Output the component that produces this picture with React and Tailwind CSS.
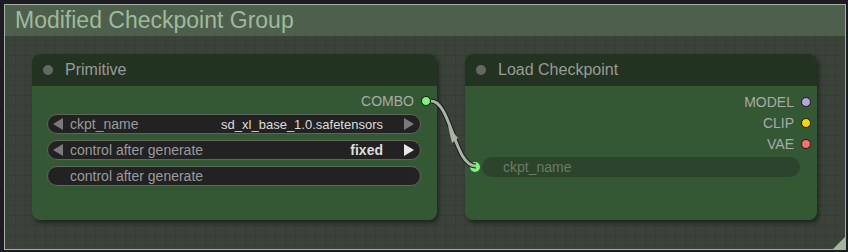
const font = { fontFamily: '"Liberation Sans", Arial, sans-serif' };

function Dot({ color, className = "" }) {
  return (
    <span
      className={`inline-block w-[10px] h-[10px] rounded-full border border-[#1a1a1a] ${className}`}
      style={{ background: color }}
    />
  );
}

function Combo({ label, value, bright, small, arrows = true }) {
  return (
    <div className="h-[20px] rounded-full bg-[#222222] border border-[#5d665b] flex items-center text-[14px] leading-none">
      {arrows ? (
        <span className="ml-[5px] w-0 h-0 border-y-[6px] border-y-transparent border-r-[10px] border-r-[#7a7a7a]" />
      ) : (
        <span className="w-[15px]" />
      )}
      <span className="ml-[7px] text-[#9a9a9a]">{label}</span>
      <span className={`ml-auto text-[#dddddd] ${small ? "text-[13px]" : "font-bold"}`}>{value}</span>
      {arrows ? (
        <span
          className={`ml-[21px] mr-[6px] w-0 h-0 border-y-[6px] border-y-transparent border-l-[10px] ${
            bright ? "border-l-[#e8e8e8]" : "border-l-[#7a7a7a]"
          }`}
        />
      ) : null}
    </div>
  );
}

function NodeTitle({ children }) {
  return (
    <div className="h-[32px] bg-[#223322] rounded-t-[8px] flex items-center">
      <span className="ml-[11px] w-[10px] h-[10px] rounded-full bg-[#666666]" />
      <span className="ml-[12px] text-[16px] text-[#9a9a9a] leading-none">{children}</span>
    </div>
  );
}

function Output({ label, color }) {
  return (
    <div className="h-[21px] flex items-center justify-end text-[14px] text-[#aaaaaa] leading-none">
      <span>{label}</span>
      <Dot color={color} className="ml-[7px] mr-[6px]" />
    </div>
  );
}

export default function App() {
  return (
    <div className="w-[848px] h-[252px] bg-[#1d1c22] pt-[4px] pl-[4px] pr-[2px] pb-[2px]" style={font}>
      <div className="relative w-[842px] h-[246px] border border-[#a3b5a0] bg-[#3b4239] bg-[linear-gradient(rgba(0,0,0,0.07)_1px,transparent_1px),linear-gradient(90deg,rgba(0,0,0,0.07)_1px,transparent_1px)] bg-[size:10px_10px]">
        {/* group title */}
        <div className="h-[31px] bg-[#4f5f4e] flex items-center">
          <span className="ml-[10px] text-[23px] text-[#9dbb99] leading-none">Modified Checkpoint Group</span>
        </div>

        <div className="flex gap-[28px] pl-[27px] pt-[18px]">
          {/* Primitive */}
          <div className="w-[405px] h-[166px] rounded-[8px] bg-[#345834] shadow-[2px_3px_4px_rgba(0,0,0,0.45)]">
            <NodeTitle>Primitive</NodeTitle>
            <div className="pt-[4px] px-[15px] pr-[16px]">
              <div className="h-[21px] flex items-center justify-end text-[14px] text-[#aaaaaa] leading-none mr-[-10px]">
                <span>COMBO</span>
                <Dot color="#7cf57c" className="ml-[7px]" />
              </div>
              <div className="mt-[3px] flex flex-col gap-[6px]">
                <Combo label="ckpt_name" value="sd_xl_base_1.0.safetensors" small />
                <Combo label="control after generate" value="fixed" bright />
                <Combo label="control after generate" arrows={false} />
              </div>
            </div>
          </div>

          {/* Load Checkpoint */}
          <div className="w-[352px] h-[166px] rounded-[8px] bg-[#345834] shadow-[2px_3px_4px_rgba(0,0,0,0.45)]">
            <NodeTitle>Load Checkpoint</NodeTitle>
            <div className="pt-[5px]">
              <Output label="MODEL" color="#b7a3e0" />
              <Output label="CLIP" color="#ffd500" />
              <Output label="VAE" color="#ff6e6e" />
              <div className="mt-[3px] flex items-center">
                <Dot color="#7cf57c" className="ml-[5px] border-0" />
                <div className="ml-[2px] w-[318px] h-[20px] rounded-full bg-[#2d442c] flex items-center">
                  <span className="ml-[21px] text-[14px] text-[#697b67] leading-none">ckpt_name</span>
                </div>
              </div>
            </div>
          </div>
        </div>

        {/* link wire */}
        <svg className="absolute left-0 top-0 pointer-events-none" width="842" height="246">
          <path d="M426 96 C 446 96, 449 161, 471 161" fill="none" stroke="#1a1f1a" strokeWidth="5" />
          <path d="M426 96 C 446 96, 449 161, 471 161" fill="none" stroke="#a9b4a7" strokeWidth="3" />
          <polygon points="443,121 453,133 447,138" fill="#a9b4a7" />
        </svg>

        {/* resize corner */}
        <svg className="absolute right-0 bottom-0" width="12" height="12">
          <polygon points="12,0 12,12 0,12" fill="#a3b5a0" />
        </svg>
      </div>
    </div>
  );
}
